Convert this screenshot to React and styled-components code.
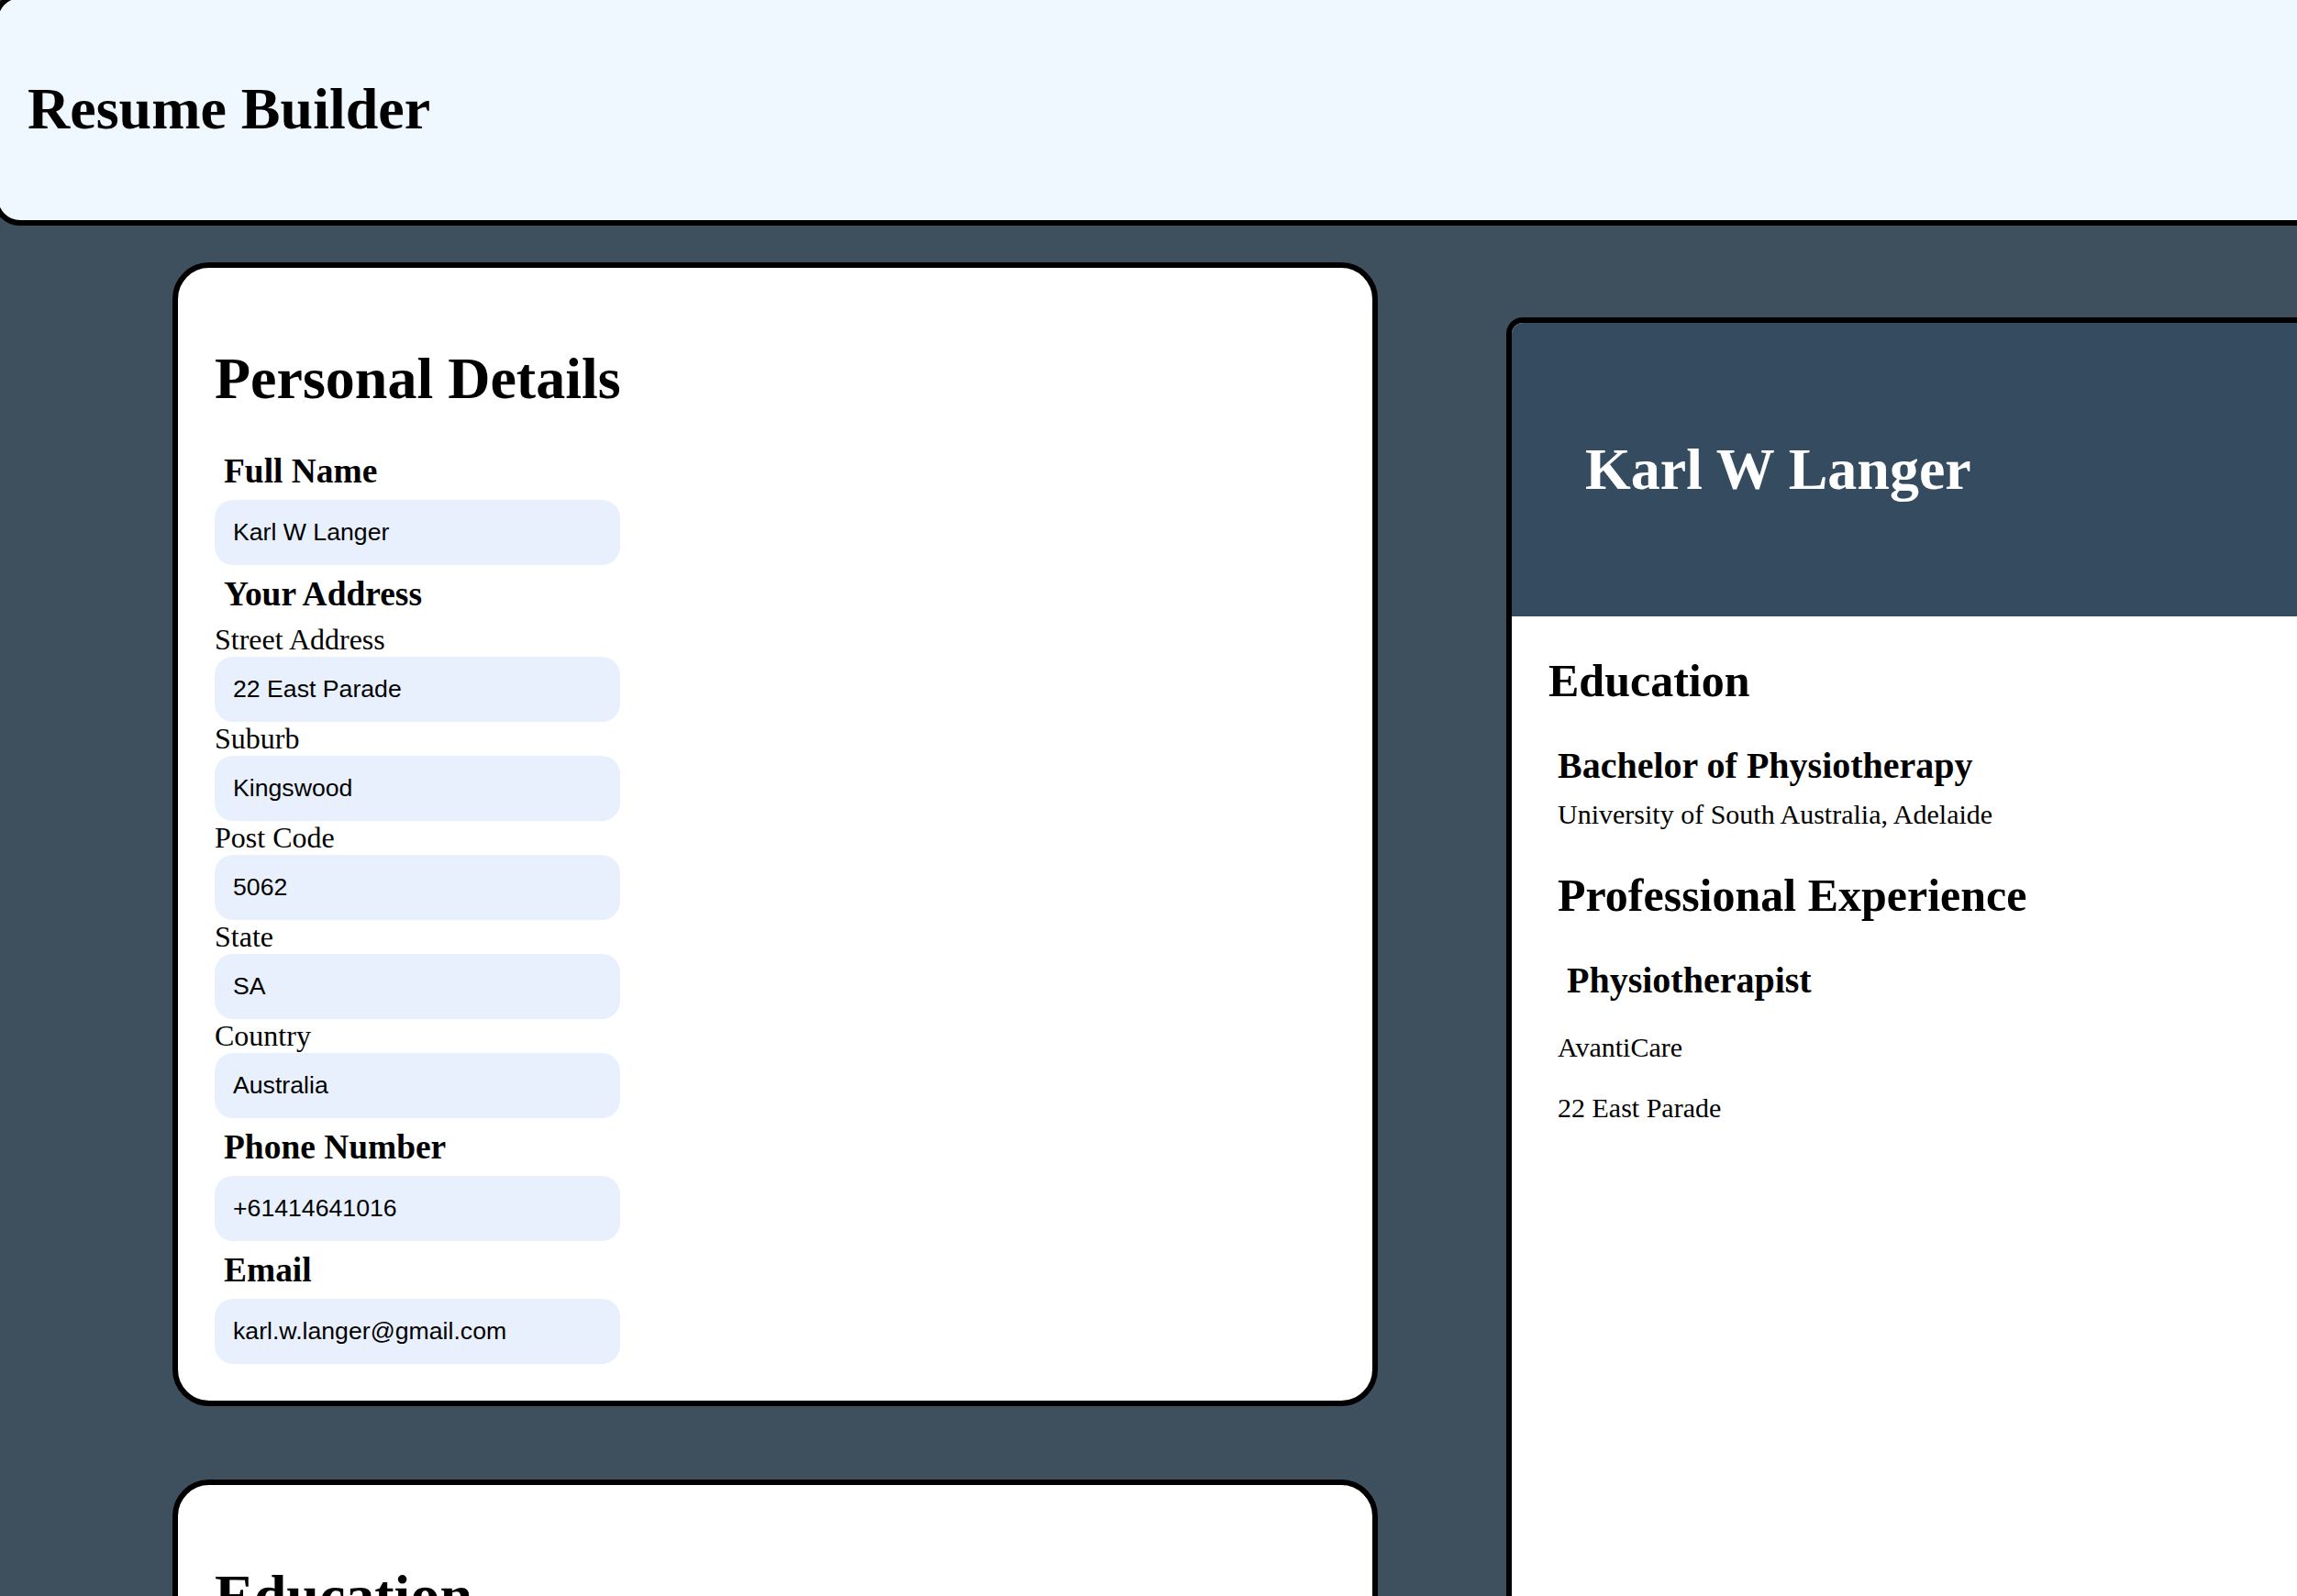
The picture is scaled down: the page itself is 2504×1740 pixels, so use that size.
import React from "react"
import styled, { createGlobalStyle } from "styled-components"

const personal = {
  name: "Karl W Langer",
  street: "22 East Parade",
  suburb: "Kingswood",
  postCode: "5062",
  state: "SA",
  country: "Australia",
  phone: "+61414641016",
  email: "karl.w.langer@gmail.com",
}

const GlobalStyle = createGlobalStyle`
  html,
  body {
    margin: 0;
    padding: 0;
    overflow: hidden;
  }

  body {
    background-color: #3e4f5e;
    font-family: "Liberation Serif", "Times New Roman", serif;
    color: #000000;
  }

  * {
    box-sizing: border-box;
  }
`

const Field = ({ label, value }) => (
  <Group>
    <FieldHeading>{label}</FieldHeading>
    <Input type="text" value={value} readOnly />
  </Group>
)

const SubField = ({ label, value }) => (
  <div>
    <SubLabel>{label}</SubLabel>
    <Input type="text" value={value} readOnly />
  </div>
)

export default function App() {
  return (
    <>
      <GlobalStyle />
      <Header>
        <Title>Resume Builder</Title>
      </Header>
      <Main>
        <FormColumn>
          <Card>
            <SectionTitle>Personal Details</SectionTitle>
            <Fields>
              <Field label="Full Name" value={personal.name} />
              <Group>
                <FieldHeading>Your Address</FieldHeading>
                <div>
                  <SubField label="Street Address" value={personal.street} />
                  <SubField label="Suburb" value={personal.suburb} />
                  <SubField label="Post Code" value={personal.postCode} />
                  <SubField label="State" value={personal.state} />
                  <SubField label="Country" value={personal.country} />
                </div>
              </Group>
              <Field label="Phone Number" value={personal.phone} />
              <Field label="Email" value={personal.email} />
            </Fields>
          </Card>
          <Card>
            <SectionTitle>Education</SectionTitle>
            <Fields>
              <Field label="Degree" value="Bachelor of Physiotherapy" />
              <Field label="Institution" value="University of South Australia, Adelaide" />
            </Fields>
          </Card>
        </FormColumn>

        <Preview>
          <PreviewHeader>
            <PreviewName>{personal.name}</PreviewName>
          </PreviewHeader>
          <PreviewBody>
            <BodyHeading>Education</BodyHeading>
            <Entries>
              <EntryTitle $top={41}>Bachelor of Physiotherapy</EntryTitle>
              <EntryText $top={12}>University of South Australia, Adelaide</EntryText>
              <BodyHeading $top={43}>Professional Experience</BodyHeading>
              <EntryTitle $top={41} $indent>
                Physiotherapist
              </EntryTitle>
              <EntryText $top={32}>AvantiCare</EntryText>
              <EntryText $top={31}>22 East Parade</EntryText>
            </Entries>
          </PreviewBody>
        </Preview>
      </Main>
    </>
  )
}

const Header = styled.header`
  width: calc(100% + 60px);
  height: 254px;
  margin: -8px 0 0 -8px;
  padding: 0 32px;
  display: flex;
  align-items: center;
  background-color: #f0f8ff;
  border: 6px solid #000000;
  border-radius: 30px;
`

const Title = styled.h1`
  margin: 0;
  font-size: 64px;
  line-height: 74px;
  font-weight: 700;
`

const Main = styled.main`
  display: flex;
  align-items: flex-start;
  gap: 140px;
  padding: 40px 0 0 188px;
`

const FormColumn = styled.div`
  flex-shrink: 0;
  width: 1314px;
  display: flex;
  flex-direction: column;
  gap: 80px;
`

const Card = styled.section`
  background-color: #ffffff;
  border: 6px solid #000000;
  border-radius: 40px;
  padding: 40px;
`

const SectionTitle = styled.h1`
  margin: 44px 0 42px;
  font-size: 64px;
  line-height: 74px;
  font-weight: 700;
`

const Fields = styled.div`
  display: flex;
  flex-direction: column;
  gap: 10px;
`

const Group = styled.div`
  display: flex;
  flex-direction: column;
  gap: 10px;
`

const FieldHeading = styled.h3`
  margin: 0;
  padding-left: 10px;
  font-size: 37.44px;
  line-height: 43px;
  font-weight: 700;
`

const SubLabel = styled.label`
  display: block;
  font-size: 32px;
  line-height: 37px;
`

const Input = styled.input`
  display: block;
  width: 442px;
  height: 71px;
  padding: 0 20px;
  border: none;
  border-radius: 20px;
  outline: none;
  background-color: #e8f0fe;
  font-family: "Liberation Sans", Arial, sans-serif;
  font-size: 26.67px;
  color: #000000;
`

const Preview = styled.section`
  flex-shrink: 0;
  width: 1100px;
  min-height: 1600px;
  margin-top: 60px;
  background-color: #ffffff;
  border: 6px solid #000000;
  border-radius: 18px;
  overflow: hidden;
`

const PreviewHeader = styled.div`
  height: 320px;
  padding: 0 80px;
  display: flex;
  align-items: center;
  background-color: #344b60;
`

const PreviewName = styled.h1`
  margin: 0;
  font-size: 64px;
  line-height: 74px;
  font-weight: 700;
  color: #ffffff;
`

const PreviewBody = styled.div`
  padding: 42px 40px 0;
`

const BodyHeading = styled.h2`
  margin: ${(props) => props.$top || 0}px 0 0;
  font-size: 50px;
  line-height: 57px;
  font-weight: 700;
`

const Entries = styled.div`
  margin-left: 10px;
`

const EntryTitle = styled.h3`
  margin: ${(props) => props.$top}px 0 0;
  padding-left: ${(props) => (props.$indent ? "10px" : "0")};
  font-size: 40px;
  line-height: 46px;
  font-weight: 700;
`

const EntryText = styled.p`
  margin: ${(props) => props.$top}px 0 0;
  font-size: 30px;
  line-height: 35px;
`
